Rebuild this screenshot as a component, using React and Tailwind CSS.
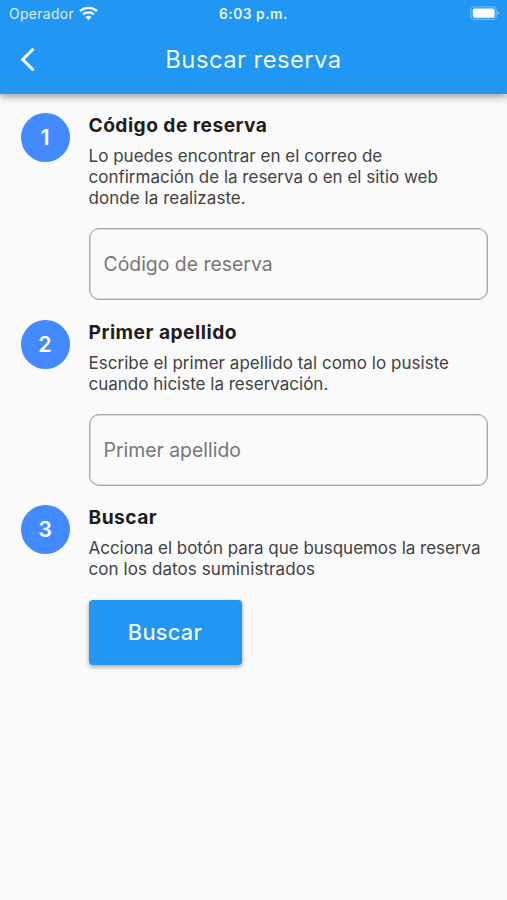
function StatusBar() {
  return (
    <div className="grid h-[28px] grid-cols-3 items-center pl-[9px] pr-[6px] text-[13.8px] leading-[28px]">
      <div className="flex items-center gap-[5px] text-white/85">
        <span className="tracking-[0.4px]">Operador</span>
        <svg className="-mt-[2px] h-[14px] w-[19px]" viewBox="0 0 19 14" fill="none" stroke="white">
          <path d="M1 5.2C5.6.8 13.4.8 18 5.2" strokeWidth="2.4" />
          <path d="M4 8.4c3-2.8 8-2.8 11 0" strokeWidth="2.2" />
          <path d="M9.5 14l-3-3.1c1.6-1.6 4.4-1.6 6 0z" fill="white" stroke="none" />
        </svg>
      </div>
      <span className="whitespace-nowrap pr-[3px] text-center font-semibold tracking-[0.5px] text-white/90">6:03 p.m.</span>
      <svg className="-mt-[2px] h-[14px] w-[31px] justify-self-end" viewBox="0 0 31 14">
        <rect x="0.8" y="0.8" width="25.4" height="12.6" rx="3.5" fill="none" stroke="white" strokeOpacity="0.35" strokeWidth="1.3" />
        <rect x="2.8" y="2.4" width="21.8" height="9.4" rx="1.8" fill="white" />
        <path d="M27.6 5.2c1.8.6 1.8 3.3 0 3.9z" fill="white" fillOpacity="0.5" />
      </svg>
    </div>
  );
}

function Step({ number, title, titleClass, lines, children }) {
  return (
    <section className="flex gap-[19px]">
      <div className="flex size-[49px] shrink-0 items-center justify-center rounded-full bg-[#448aff] pb-px text-[21.5px] font-semibold leading-[50px] text-white">
        {number}
      </div>
      <div className="min-w-0 flex-1">
        <h2 className={`h-[24px] text-[19.2px] font-bold leading-[24px] text-[#1e1e1e] ${titleClass}`}>{title}</h2>
        <p className="mt-[9px] text-[17px] leading-[20.9px] text-[#424242]">
          {lines.map(([text, cls]) => (
            <span key={text} className={`block whitespace-nowrap ${cls}`}>{text}</span>
          ))}
        </p>
        {children}
      </div>
    </section>
  );
}

function Field({ placeholder }) {
  return (
    <input
      placeholder={placeholder}
      className="mt-[19.5px] mb-[19.3px] block h-[72px] w-full rounded-[10px] border border-[#a8a8a8] bg-transparent px-[14px] text-[19.4px] shadow-[inset_0_0_0_0.5px_#b8b8b8] outline-none placeholder:text-[#777777]"
    />
  );
}

export default function App() {
  return (
    <main className="h-[900px] w-full overflow-hidden bg-[#fafafa] font-['Inter','Liberation_Sans',sans-serif]">
      <header className="h-[94px] bg-[#2196f3] text-white shadow-[0_3px_7px_rgba(0,0,0,0.36)]">
        <StatusBar />
        <div className="grid h-[63px] grid-cols-[1fr_auto_1fr] items-center">
          <svg className="ml-[20px] h-[26px] w-[16px]" viewBox="0 0 16 26" fill="none" stroke="white" strokeWidth="3">
            <path d="M13.5 1.7L2.7 12.5l10.8 10.8" />
          </svg>
          <h1 className="text-[23.8px] tracking-[0.46px] text-white/95">Buscar reserva</h1>
        </div>
      </header>
      <div className="pt-[19.2px] pr-[19px] pl-[20.5px]">
        <Step
          number="1"
          title="Código de reserva"
          titleClass="tracking-[0.45px]"
          lines={[
            ["Lo puedes encontrar en el correo de", "tracking-[0.02px]"],
            ["confirmación de la reserva o en el sitio web", "tracking-normal"],
            ["donde la realizaste.", "tracking-[0.05px]"],
          ]}
        >
          <Field placeholder="Código de reserva" />
        </Step>
        <Step
          number="2"
          title="Primer apellido"
          titleClass="tracking-[0.5px]"
          lines={[
            ["Escribe el primer apellido tal como lo pusiste", "tracking-[0.03px]"],
            ["cuando hiciste la reservación.", "tracking-normal"],
          ]}
        >
          <Field placeholder="Primer apellido" />
        </Step>
        <Step
          number="3"
          title="Buscar"
          titleClass="tracking-[0.45px]"
          lines={[
            ["Acciona el botón para que busquemos la reserva", "tracking-[-0.03px]"],
            ["con los datos suministrados", "tracking-[0.08px]"],
          ]}
        >
          <button className="mt-[19.5px] block h-[65px] w-[153px] rounded-[4px] bg-[#2196f3] text-[21.8px] font-medium tracking-[0.25px] text-white/95 shadow-[0_2px_4px_rgba(0,0,0,0.35)]">
            Buscar
          </button>
        </Step>
      </div>
    </main>
  );
}
